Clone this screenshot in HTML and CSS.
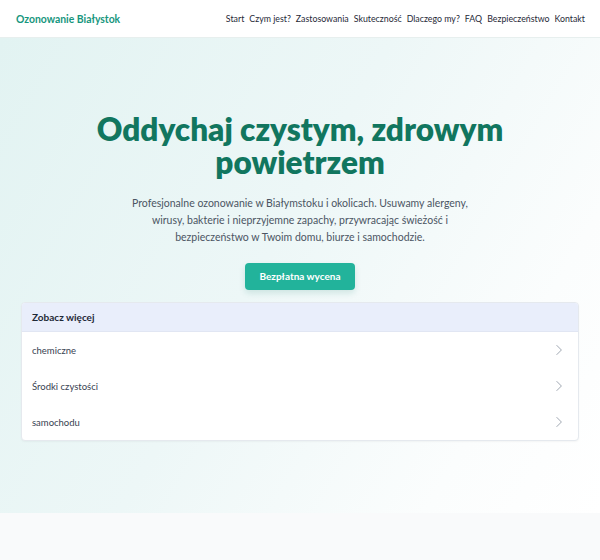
FILE: index.html
```html
<!DOCTYPE html>
<html lang="pl">
<head>
<meta charset="utf-8">
<title>Ozonowanie Białystok</title>
<link rel="stylesheet" href="styles.css">
</head>
<body>
<header class="topbar">
  <a class="brand" href="#">Ozonowanie Białystok</a>
  <nav class="nav">
    <a href="#">Start</a>
    <a href="#">Czym jest?</a>
    <a href="#">Zastosowania</a>
    <a href="#">Skuteczność</a>
    <a href="#">Dlaczego my?</a>
    <a href="#">FAQ</a>
    <a href="#">Bezpieczeństwo</a>
    <a href="#">Kontakt</a>
  </nav>
</header>
<main>
  <section class="hero">
    <h1 class="hero-title">Oddychaj czystym, zdrowym powietrzem</h1>
    <p class="hero-lead">Profesjonalne ozonowanie w Białymstoku i okolicach. Usuwamy alergeny, wirusy, bakterie i nieprzyjemne zapachy, przywracając świeżość i bezpieczeństwo w Twoim domu, biurze i samochodzie.</p>
    <a class="btn" href="#">Bezpłatna wycena</a>
    <div class="more">
      <div class="more-head">Zobacz więcej</div>
      <a class="more-row" href="#"><span>chemiczne</span><svg class="chev" viewBox="0 0 10 14" width="8" height="12"><path d="M2 1l6 6-6 6" fill="none" stroke="currentColor" stroke-width="1.2"/></svg></a>
      <a class="more-row" href="#"><span>Środki czystości</span><svg class="chev" viewBox="0 0 10 14" width="8" height="12"><path d="M2 1l6 6-6 6" fill="none" stroke="currentColor" stroke-width="1.2"/></svg></a>
      <a class="more-row" href="#"><span>samochodu</span><svg class="chev" viewBox="0 0 10 14" width="8" height="12"><path d="M2 1l6 6-6 6" fill="none" stroke="currentColor" stroke-width="1.2"/></svg></a>
    </div>
  </section>
  <section class="after"></section>
</main>
</body>
</html>
```
FILE: styles.css
```css
* { box-sizing: border-box; }
html, body { margin: 0; padding: 0; }
body {
  font-family: Lato, "Open Sans", sans-serif;
  color: #1f2937;
  background: #f9fafb;
}
a { text-decoration: none; color: inherit; }

.topbar {
  height: 38px;
  display: flex;
  align-items: center;
  justify-content: space-between;
  padding: 0 15px 0 16px;
  background: #fff;
  border-bottom: 1px solid #e7efee;
}
.brand {
  font-weight: 700;
  font-size: 10.4px;
  color: #17967d;
}
.nav {
  display: flex;
  gap: 5px;
  font-size: 8.8px;
  color: #1f2937;
}

.hero {
  display: flex;
  flex-direction: column;
  align-items: center;
  padding: 75px 21px 72px;
  background: linear-gradient(120deg, #e2f3f2 0%, #edf7f7 45%, #fbfdfd 80%, #ffffff 100%);
}
.hero-title {
  margin: 0;
  max-width: 440px;
  text-align: center;
  font-size: 31.5px;
  line-height: 33px;
  font-weight: 800;
  color: #11765f;
}
.hero-lead {
  margin: 16px 0 0;
  max-width: 342px;
  text-align: center;
  font-size: 10.5px;
  line-height: 17px;
  color: #4b5563;
}
.btn {
  margin-top: 17px;
  display: inline-block;
  padding: 0 14px;
  height: 27px;
  line-height: 27px;
  border-radius: 4px;
  background: #22b39b;
  color: #fff;
  font-weight: 700;
  font-size: 10px;
  box-shadow: 0 3px 6px rgba(16, 120, 100, 0.15);
}

.more {
  margin-top: 12px;
  width: 100%;
  background: #fff;
  border: 1px solid #e5e9ee;
  border-radius: 4px;
  overflow: hidden;
  box-shadow: 0 1px 2px rgba(0,0,0,0.04);
}
.more-head {
  height: 29px;
  display: flex;
  align-items: center;
  padding: 0 10px;
  background: #e9eefb;
  border-bottom: 1px solid #e1e6f3;
  font-weight: 700;
  font-size: 10px;
  color: #1f2937;
}
.more-row {
  height: 36px;
  display: flex;
  align-items: center;
  justify-content: space-between;
  padding: 0 15px 0 10px;
  font-size: 9.5px;
  color: #374151;
}
.chev { color: #9ca3af; }

.after { height: 60px; }
```
